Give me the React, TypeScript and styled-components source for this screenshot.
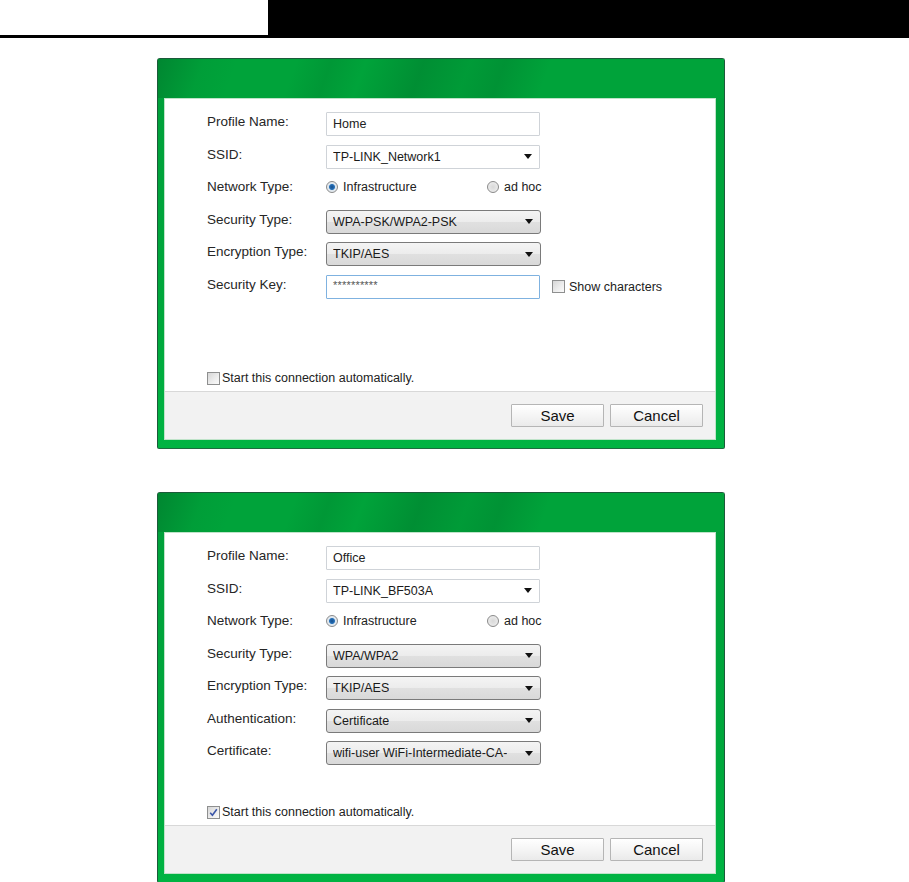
import React from "react";
import styled, { createGlobalStyle } from "styled-components";

const GlobalStyle = createGlobalStyle`
  html, body {
    margin: 0;
    padding: 0;
    background: #ffffff;
  }
  body {
    font-family: "Liberation Sans", Arial, sans-serif;
    color: #222222;
  }
`;

type FieldKind = "text" | "select" | "combo" | "radio" | "password";

interface Field {
  label: string;
  kind: FieldKind;
  value?: string;
}

interface Profile {
  fields: Field[];
  auto: boolean;
}

const profiles: Profile[] = [
  {
    auto: false,
    fields: [
      { label: "Profile Name:", kind: "text", value: "Home" },
      { label: "SSID:", kind: "combo", value: "TP-LINK_Network1" },
      { label: "Network Type:", kind: "radio" },
      { label: "Security Type:", kind: "select", value: "WPA-PSK/WPA2-PSK" },
      { label: "Encryption Type:", kind: "select", value: "TKIP/AES" },
      { label: "Security Key:", kind: "password", value: "**********" },
    ],
  },
  {
    auto: true,
    fields: [
      { label: "Profile Name:", kind: "text", value: "Office" },
      { label: "SSID:", kind: "combo", value: "TP-LINK_BF503A" },
      { label: "Network Type:", kind: "radio" },
      { label: "Security Type:", kind: "select", value: "WPA/WPA2" },
      { label: "Encryption Type:", kind: "select", value: "TKIP/AES" },
      { label: "Authentication:", kind: "select", value: "Certificate" },
      { label: "Certificate:", kind: "select", value: "wifi-user WiFi-Intermediate-CA-" },
    ],
  },
];

const Field = ({ field }: { field: Field }) => {
  switch (field.kind) {
    case "text":
      return <TextBox>{field.value}</TextBox>;
    case "password":
      return (
        <KeyWrap>
          <TextBox $focused>
            <Stars>{field.value}</Stars>
          </TextBox>
          <CheckLabel>
            <CheckBox />
            Show characters
          </CheckLabel>
        </KeyWrap>
      );
    case "combo":
      return (
        <DropDown $raised={false}>
          <span>{field.value}</span>
          <Arrow />
        </DropDown>
      );
    case "select":
      return (
        <DropDown $raised>
          <span>{field.value}</span>
          <Arrow />
        </DropDown>
      );
    case "radio":
      return (
        <RadioGroup>
          <RadioItem $wide>
            <Radio $on />
            Infrastructure
          </RadioItem>
          <RadioItem>
            <Radio />
            ad hoc
          </RadioItem>
        </RadioGroup>
      );
  }
};

const Dialog = ({ profile }: { profile: Profile }) => (
  <Frame>
    <TitleBar />
    <Panel>
      <Body>
        {profile.fields.map((f, i) => (
          <Row key={i}>
            <Label>{f.label}</Label>
            <Field field={f} />
          </Row>
        ))}
        <AutoRow>
          <CheckBox $checked={profile.auto}>
            {profile.auto && (
              <svg width="9" height="9" viewBox="0 0 9 9">
                <path d="M1.2 4.8 L3.4 7.2 L7.8 1.2" fill="none" stroke="#3a55a8" strokeWidth="1.6" />
              </svg>
            )}
          </CheckBox>
          Start this connection automatically.
        </AutoRow>
      </Body>
      <Footer>
        <Button>Save</Button>
        <Button>Cancel</Button>
      </Footer>
    </Panel>
  </Frame>
);

export default function App() {
  return (
    <>
      <GlobalStyle />
      <TopBar>
        <TopTab />
      </TopBar>
      <Page>
        {profiles.map((p, i) => (
          <Dialog key={i} profile={p} />
        ))}
      </Page>
    </>
  );
}

const TopBar = styled.div`
  display: flex;
  height: 38px;
  background: #000000;
`;

const TopTab = styled.div`
  width: 268px;
  height: 35px;
  background: #ffffff;
`;

const Page = styled.div`
  display: flex;
  flex-direction: column;
  gap: 43px;
  padding: 20px 0 0 157px;
`;

const Frame = styled.div`
  width: 568px;
  height: 391px;
  box-sizing: border-box;
  display: flex;
  flex-direction: column;
  padding: 0 8px 8px 6px;
  background: linear-gradient(180deg, #009f3a 0%, #00a83c 70%, #00b443 100%);
  border: 1px solid #1c5a3a;
  border-bottom-color: #1d6b3e;
  border-radius: 3px 3px 2px 2px;
`;

const TitleBar = styled.div`
  height: 39px;
  flex: none;
  margin: 0 -8px 0 -6px;
  background:
    linear-gradient(
      110deg,
      rgba(0, 60, 25, 0.28) 0%,
      rgba(0, 60, 25, 0.05) 8%,
      rgba(0, 60, 25, 0) 14%,
      rgba(0, 60, 25, 0) 24%,
      rgba(0, 70, 25, 0.12) 30%,
      rgba(0, 70, 25, 0) 36%,
      rgba(0, 60, 25, 0.2) 46%,
      rgba(0, 60, 25, 0.08) 54%,
      rgba(0, 60, 25, 0.16) 60%,
      rgba(0, 60, 25, 0) 68%
    ),
    #00a33a;
`;

const Panel = styled.div`
  flex: 1;
  display: flex;
  flex-direction: column;
  background: #ffffff;
  border: 1px solid #bfe3c9;
`;

const Body = styled.div`
  flex: 1;
  display: flex;
  flex-direction: column;
  padding: 13px 0 0 42px;
`;

const Row = styled.div`
  display: flex;
  align-items: flex-start;
  height: 32.5px;
`;

const Label = styled.div`
  width: 119px;
  flex: none;
  font-size: 13.5px;
  line-height: 20px;
  color: #262626;
`;

const TextBox = styled.div<{ $focused?: boolean }>`
  width: 214px;
  height: 24px;
  box-sizing: border-box;
  display: flex;
  align-items: center;
  padding: 0 6px;
  font-size: 12.5px;
  color: #222222;
  background: #ffffff;
  border: 1px solid ${(p) => (p.$focused ? "#7fb2e0" : "#cfd3d8")};
  border-radius: 1px;
`;

const Stars = styled.span`
  font-size: 11px;
  letter-spacing: 0.2px;
  color: #555555;
  margin-top: -4px;
`;

const KeyWrap = styled.div`
  display: flex;
  align-items: center;
  gap: 12px;
`;

const DropDown = styled.div<{ $raised: boolean }>`
  width: ${(p) => (p.$raised ? "215px" : "214px")};
  height: 24px;
  box-sizing: border-box;
  display: flex;
  align-items: center;
  justify-content: space-between;
  padding: 0 7px 0 6px;
  font-size: 12.5px;
  color: #1a1a1a;
  white-space: nowrap;
  overflow: hidden;
  background: ${(p) =>
    p.$raised ? "linear-gradient(180deg, #f4f4f4 0%, #ececec 50%, #e0e0e0 51%, #d9d9d9 100%)" : "#ffffff"};
  border: 1px solid ${(p) => (p.$raised ? "#7a7a7a" : "#cfd3d8")};
  border-radius: ${(p) => (p.$raised ? "3px" : "1px")};

  span {
    overflow: hidden;
  }
`;

const Arrow = styled.i`
  flex: none;
  width: 0;
  height: 0;
  margin-left: 4px;
  border-left: 4px solid transparent;
  border-right: 4px solid transparent;
  border-top: 5px solid #111111;
`;

const RadioGroup = styled.div`
  display: flex;
  align-items: center;
  height: 20px;
  font-size: 12.5px;
`;

const RadioItem = styled.label<{ $wide?: boolean }>`
  display: flex;
  align-items: center;
  gap: 5px;
  width: ${(p) => (p.$wide ? "161px" : "auto")};
`;

const Radio = styled.span<{ $on?: boolean }>`
  width: 12px;
  height: 12px;
  box-sizing: border-box;
  border-radius: 50%;
  border: 1px solid #8a8a8a;
  background: ${(p) =>
    p.$on
      ? "radial-gradient(circle, #174f8c 0, #2670b8 2.5px, #dde6ee 3.5px, #f4f4f4 100%)"
      : "radial-gradient(circle, #d8d8d8 0, #f2f2f2 100%)"};
`;

const CheckLabel = styled.label`
  display: flex;
  align-items: center;
  gap: 4px;
  font-size: 12.5px;
  color: #222222;
`;

const CheckBox = styled.span<{ $checked?: boolean }>`
  width: 13px;
  height: 13px;
  box-sizing: border-box;
  display: inline-flex;
  align-items: center;
  justify-content: center;
  border: 1px solid #8e8f8f;
  background: linear-gradient(135deg, #d6d6d6 0%, #eeeeee 60%, #fafafa 100%);
`;

const AutoRow = styled.label`
  display: flex;
  align-items: center;
  gap: 2px;
  margin-top: auto;
  margin-bottom: 6px;
  font-size: 12.5px;
  color: #222222;
`;

const Footer = styled.div`
  height: 48px;
  flex: none;
  box-sizing: border-box;
  display: flex;
  justify-content: flex-end;
  align-items: flex-start;
  gap: 6px;
  padding: 12px 12px 0 0;
  background: #f2f2f2;
  border-top: 1px solid #d8d8d8;
`;

const Button = styled.button`
  width: 93px;
  height: 23px;
  padding: 0;
  font-family: "Liberation Sans", Arial, sans-serif;
  font-size: 15px;
  color: #111111;
  background: linear-gradient(180deg, #ffffff 0%, #f4f4f4 55%, #eaeaea 100%);
  border: 1px solid #b5b5b5;
  border-radius: 1px;
`;
